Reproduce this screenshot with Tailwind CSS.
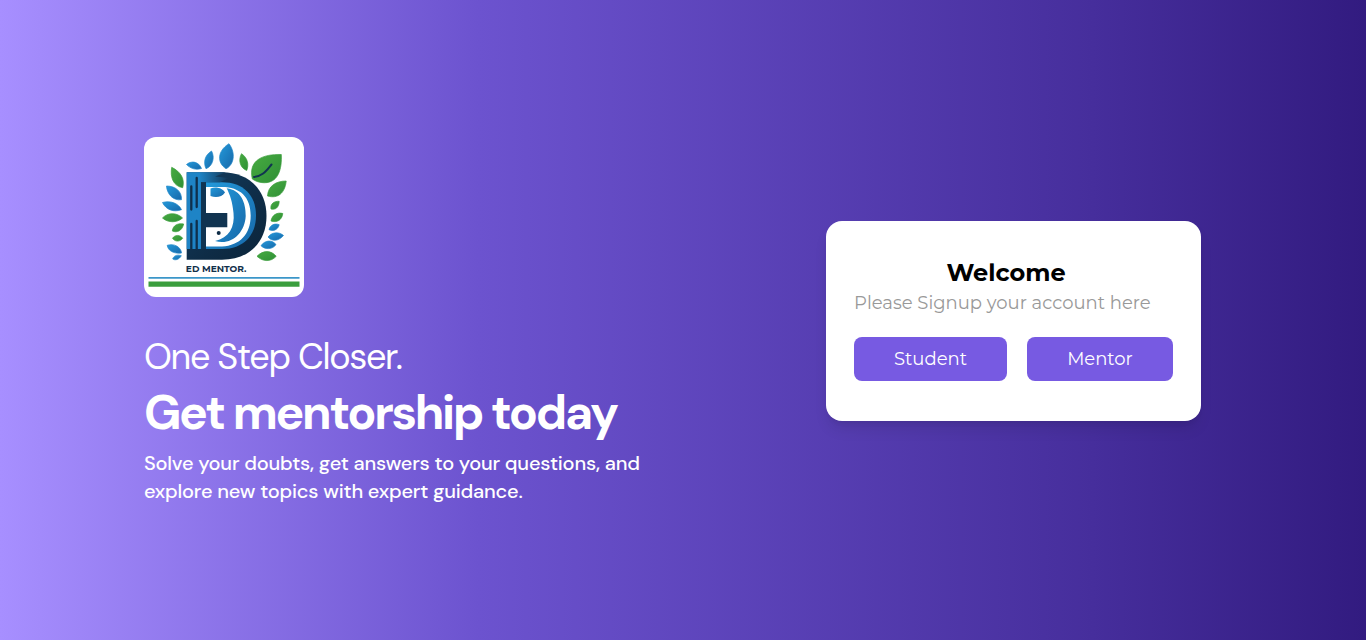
<!DOCTYPE html>
<html lang="en">
<head>
<meta charset="utf-8">
<title>Ed Mentor</title>
<script src="https://cdn.jsdelivr.net/npm/@tailwindcss/browser@4"></script>
</head>
<body class="h-screen overflow-hidden bg-[linear-gradient(90deg,#a78fff_0%,#6c53cf_35%,#462e9c_80%,#321b80_100%)] font-['DM_Sans','Inter',sans-serif]">
<main class="flex h-full items-center pl-36 pr-[165px]">
  <section class="w-[520px] pt-[2px] text-white">
    <svg class="block size-40 overflow-hidden rounded-xl bg-white" viewBox="0 0 160 160">
      <defs>
        <linearGradient id="navy" x1="0" y1="0" x2="1" y2="1"><stop offset="0" stop-color="#143e60"/><stop offset=".6" stop-color="#0e2c46"/><stop offset="1" stop-color="#0b2439"/></linearGradient>
        <linearGradient id="blue" x1="0" y1="0" x2="1" y2="1"><stop offset="0" stop-color="#2399da"/><stop offset="1" stop-color="#1768a9"/></linearGradient>
        <linearGradient id="green" x1="0" y1="0" x2="1" y2="1"><stop offset="0" stop-color="#47ab41"/><stop offset="1" stop-color="#2f8f36"/></linearGradient>
        <linearGradient id="fade"><stop offset=".3" stop-color="#1e84c6"/><stop offset="1" stop-color="#113350"/></linearGradient>
      </defs>
      <!-- leaves -->
      <g fill="url(#blue)" stroke="#1f86c8" stroke-width=".7" stroke-linejoin="round">
        <path d="M42.500 27.500C48 23 55 25 57.500 31.500C51 33.500 46 31 42.500 27.500Z"/>
        <path d="M67.500 14C71 20 69 29 62 31.700C59 25 61 18 67.500 14Z"/>
        <path d="M85 6.700C92 16 90 28 82 31.700C73 26 73 14 85 6.700Z"/>
        <path d="M22.500 49C32 49 38 55 37.500 62.700C29 64 23 57 22.500 49Z"/>
        <path d="M18.500 65.500C27 63 35 67 37.500 72.700C30 75.500 22 73 18.500 65.500Z"/>
        <path d="M23.200 108.300C30 106 37 110 37.500 116C30 117 24 114 23.200 108.300Z"/>
        <path d="M28.700 122C30 118 34 117.500 37.300 118.700C35 123 31 123.500 28.700 122Z"/>
        <path d="M135.200 87.700C134 93 129 94.500 125 92.700C126 88 131 86 135.200 87.700Z"/>
        <path d="M139.500 98.500C135 104 128 105 124 100C128 95 135 94.500 139.500 98.500Z"/>
        <path d="M132 107.500C129 112.500 121 113 117 108.700C121 103 128 102.500 132 107.500Z"/>
      </g>
      <g fill="url(#green)" stroke="#3a9d3b" stroke-width=".7" stroke-linejoin="round">
        <path d="M27.700 30.300C37 35 41 42 38.700 50.700C29 49 26 40 27.700 30.300Z"/>
        <path d="M18.500 81C24 75 33 75.500 38.500 81C33 86 24 86 18.500 81Z"/>
        <path d="M28.300 94C29 88 34 86 39.700 87C38 94 33 96 28.300 94Z"/>
        <path d="M28.500 101.300C31 97.500 36 97.500 38.700 101.300C36 105 31 105 28.500 101.300Z"/>
        <path d="M97.500 16.700C104 21 105 28 102.700 33.500C96 31 94 23 97.500 16.700Z"/>
        <path d="M137.300 17.500C138 31 135 48 117 45.500C113 45 110 43 108.300 42C104 23 119 17 137.300 17.500Z"/>
        <path d="M142.200 44C141 56 134 62 123.500 59C124 49 132 44 142.200 44Z"/>
        <path d="M135.200 64.300C135 71 131 73 127 72C126 67 130 64 135.200 64.300Z"/>
        <path d="M138.800 76.500C138 83 133 86 127 84C128 78 133 75 138.800 76.500Z"/>
        <path d="M132.200 119.300C127 125 119 125 113 119.300C119 113 127 113 132.200 119.300Z"/>
      </g>
      <path fill="none" stroke="#103450" stroke-width="2" stroke-linecap="round" d="M110 40C119 39 122 34 127.500 27.500"/>
      <!-- monogram -->
      <path fill="url(#navy)" d="M42.700 35.300H78C105 35.300 122.500 53 122.500 79C122.500 105 105 122.700 78 122.700H42.700Z"/>
      <path fill="url(#blue)" d="M62 45.300H78C99 45.300 112 58 112 78.500C112 99 99 112 78 112H62Z"/>
      <path fill="#fff" d="M62 50H78C96 50 106.700 60 106.700 78.500C106.700 97 96 108.500 78 109.500H62V90H83V76H62Z"/>
      <path fill="url(#blue)" d="M82.700 51.300C97 53 102 66 101.700 79C101 96 87 109 71 104C85 101 91 90 89.500 76C88.500 65 86 58 82.700 51.300Z"/>
      <path fill="url(#blue)" d="M66.500 51.500C73 49 79 52 81 55.500C78 60 72 61 66.500 59Z"/>
      <path fill="url(#fade)" d="M42.700 35.300H82L71 39.500L85 41L76 45.300H57V112H42.700Z"/>
      <path fill="#113450" d="M57 45.300H62V76H83.300V90.300H62V112H57Z"/>
      <circle cx="74.700" cy="96" r="2" fill="#0e2c46"/>
      <path stroke="#0f304c" stroke-width="2.300" stroke-linecap="round" d="M47.300 49.500V72.500M52.700 41V70M47.300 87V112M52.700 84V112"/>
      <text x="41.800" y="135.300" textLength="60.500" lengthAdjust="spacingAndGlyphs" class="fill-[#12304a] font-['Montserrat','Inter',sans-serif] text-[9.600px] font-bold">ED MENTOR.</text>
      <path fill="#3b96c9" d="M4.500 140H155.500V141.700H4.500Z"/>
      <path fill="#3a9e3d" d="M4.500 144.400H155.500V149.700H4.500Z"/>
    </svg>
    <h2 class="mt-9 whitespace-nowrap text-[36px] font-normal leading-[48px] tracking-[-1.3px]">One Step Closer.</h2>
    <h1 class="whitespace-nowrap text-[48px] font-bold leading-[64px] tracking-[-2.32px]">Get mentorship today</h1>
    <p class="mt-1 whitespace-nowrap text-[20px] font-medium leading-7 tracking-[-0.2px]">Solve your doubts, get answers to your questions, and<br>explore new topics with expert guidance.</p>
  </section>
  <section class="ml-auto mt-[2px] h-[200px] w-[375px] rounded-2xl bg-white px-7 pt-9 font-['Montserrat','Inter',sans-serif] shadow-lg">
    <h1 class="pr-[15px] text-center text-[24px] font-bold leading-8">Welcome</h1>
    <p class="whitespace-nowrap text-[18px] leading-7 text-[#999]">Please Signup your account here</p>
    <div class="mt-5 flex gap-5 text-[18px] text-white"><button class="h-11 w-[153px] rounded-lg bg-[#775ae2]">Student</button><button class="h-11 w-[146px] rounded-lg bg-[#775ae2]">Mentor</button></div>
  </section>
</main>
</body>
</html>
